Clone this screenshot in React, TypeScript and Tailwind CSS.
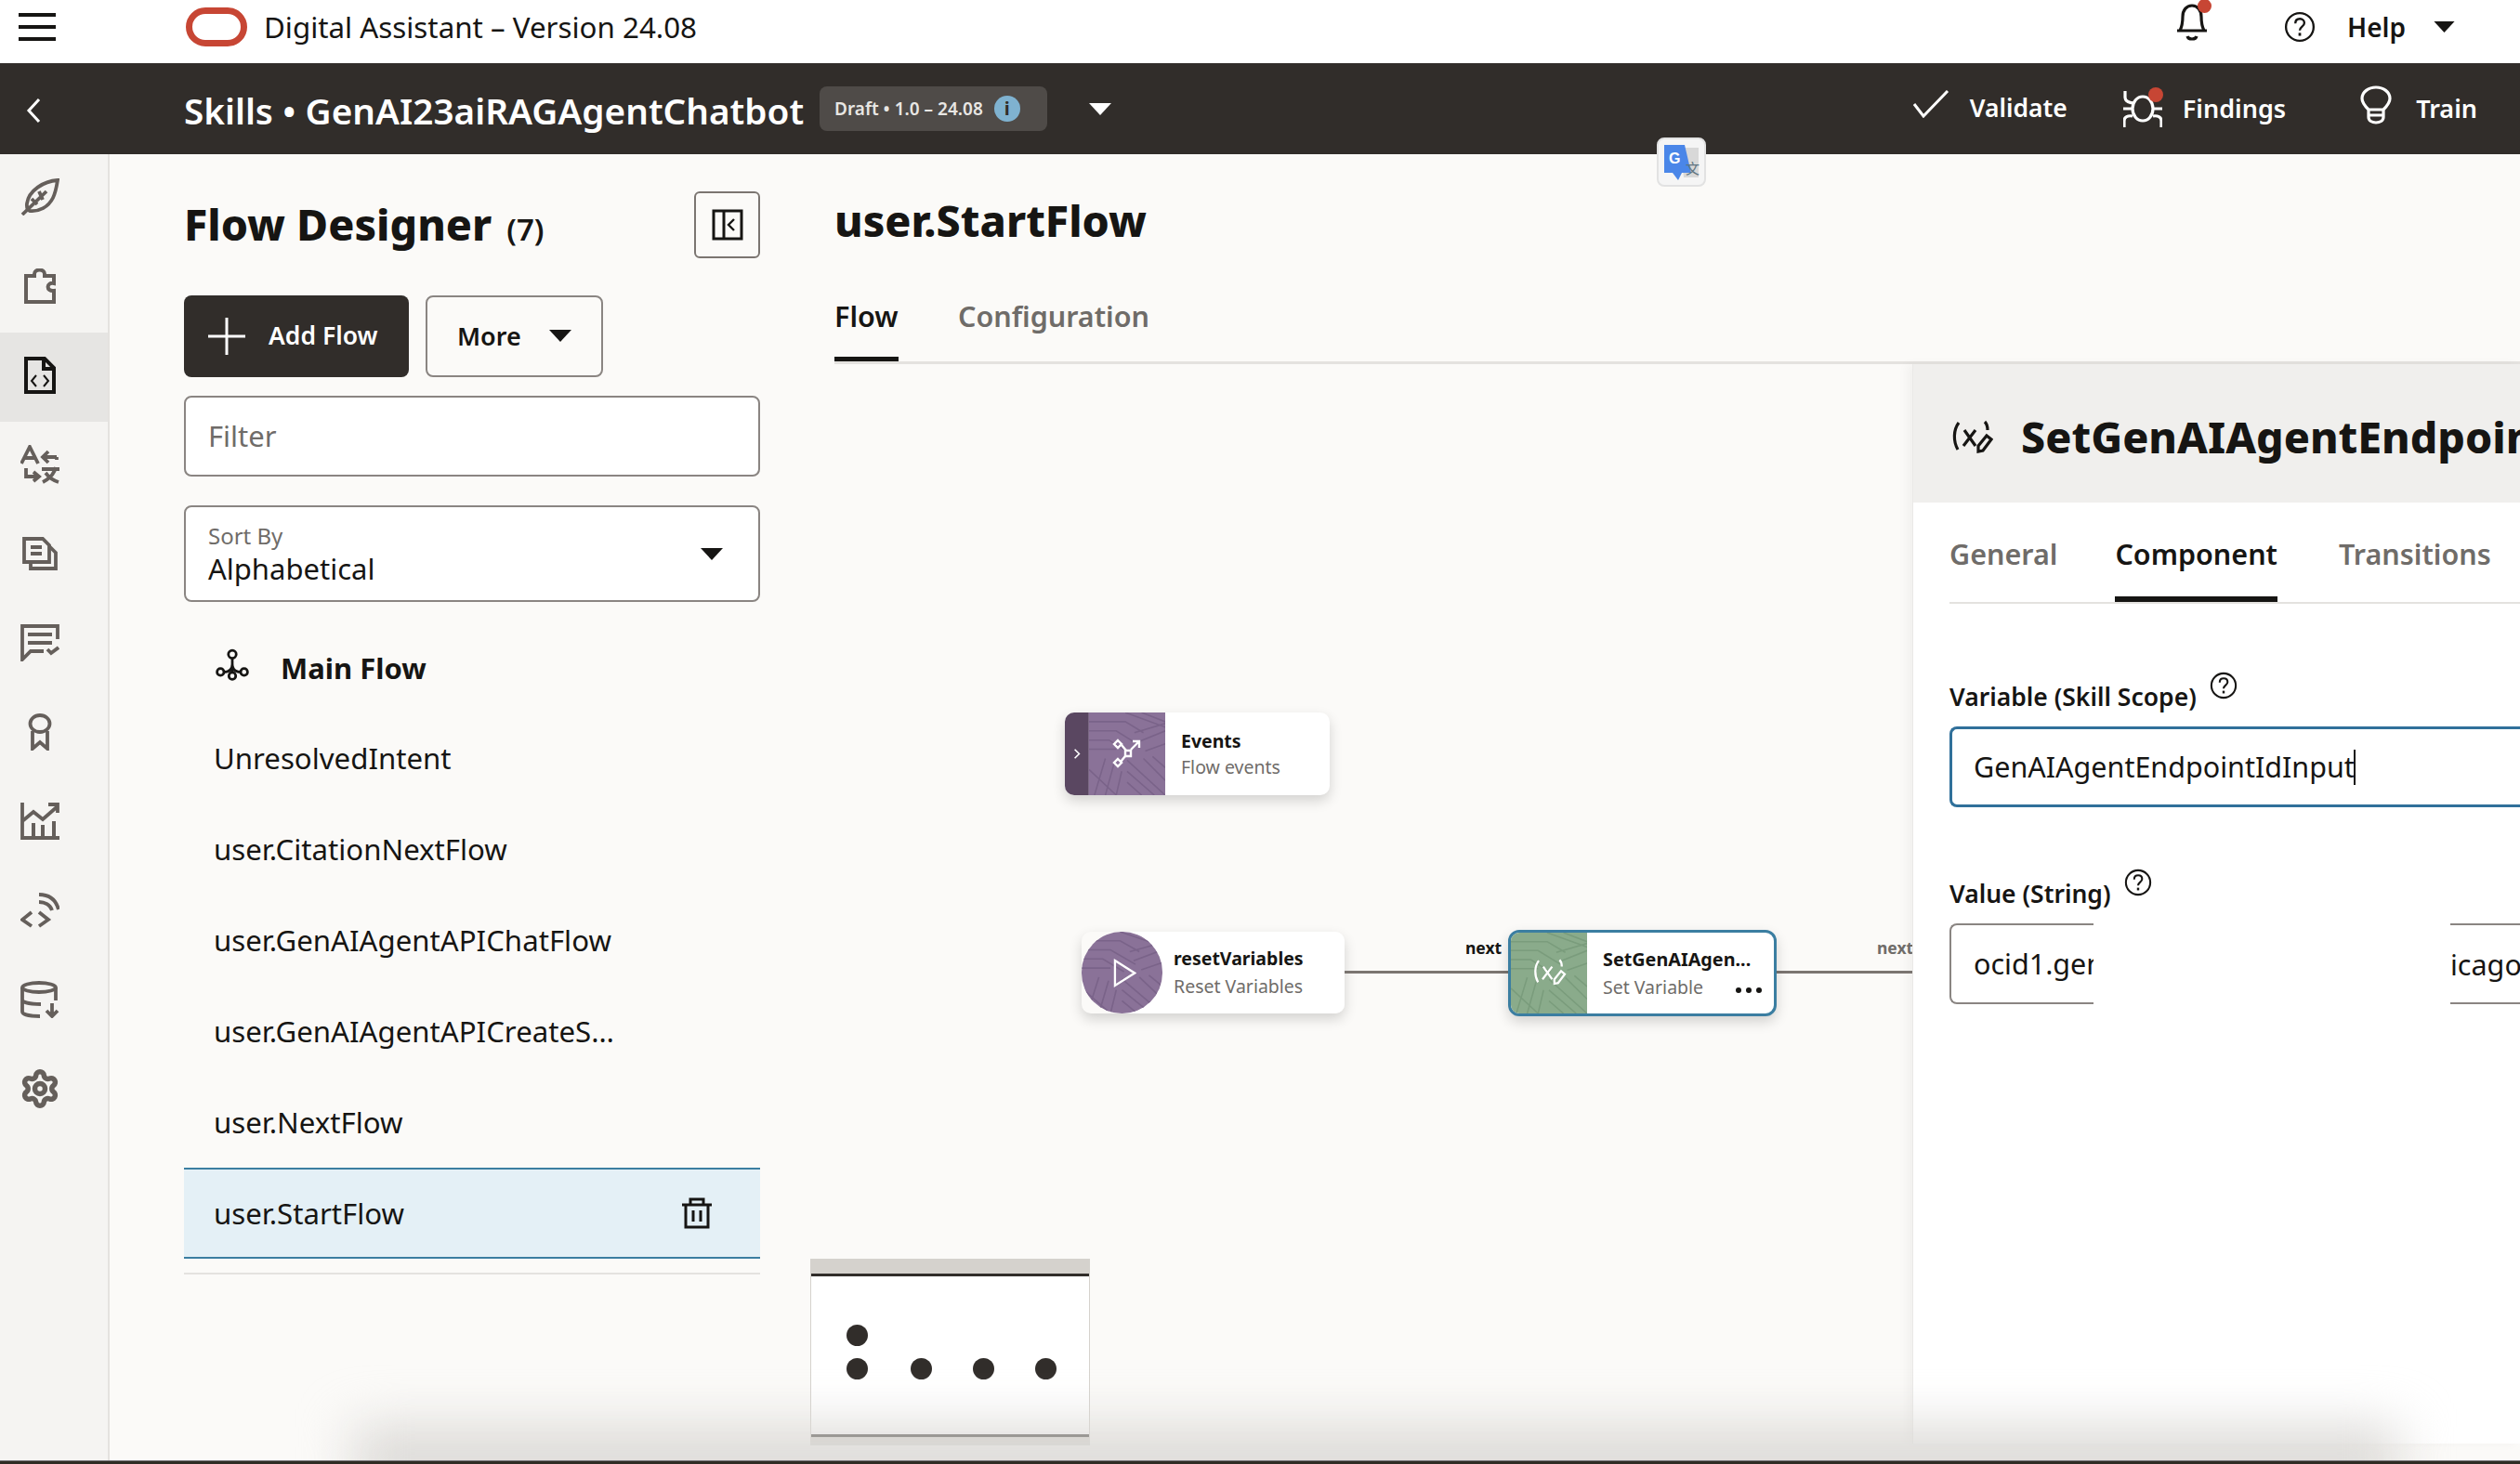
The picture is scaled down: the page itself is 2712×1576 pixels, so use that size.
import React from "react";
import { Settings } from "lucide-react";

const Tri = ({ className }: { className: string }) => (
  <svg viewBox="0 0 24 13" className={className} fill="currentColor"><path d="M0 0h24L12 13z" /></svg>
);

const Help = ({ className }: { className: string }) => (
  <svg viewBox="0 0 32 32" className={className} fill="none" stroke="currentColor" strokeWidth="2.2">
    <circle cx="16" cy="16" r="14" />
    <path d="M11.5 12.5c0-3 2-4.700 4.600-4.700s4.500 1.700 4.500 4.200c0 3.700-4.600 3.600-4.600 7.500" />
    <path d="M16 22v3" strokeWidth="2.600" />
  </svg>
);

const SetVar = ({ className, strokeW = 2.6 }: { className: string; strokeW?: number }) => (
  <svg viewBox="0 0 44 40" className={className} fill="none" stroke="currentColor" strokeWidth={strokeW}>
    <path d="M7 4C1 12 1 24 6 33" />
    <path d="M13 12l12 17M25 12L12 29" />
    <path d="M35 3c2 2 3 5 3 9" />
    <path d="M28 29l9-11 5 4-9 12-5 1z" />
  </svg>
);

const side: { active?: boolean; el: React.ReactNode }[] = [
  { el: <svg viewBox="0 0 42 40" className="w-[42px] h-[40px]" fill="none" stroke="currentColor" strokeWidth="3.800"><path d="M40 2C25 3 9 13 7 27c-.5 4 1 7 3 8 10 1 20-4 25-14 3-6 4-13 5-19z" /><path d="M2 39L28 14M12 22l6 6M20 14l4 9" /></svg> },
  { el: <svg viewBox="0 0 34 38" className="w-[34px] h-[38px]" fill="none" stroke="currentColor" strokeWidth="4"><path d="M2 8h9V6c0-6 11-6 11 0v2h10v8c-8-2-9 9 0 8v12H2z" /></svg> },
  { active: true, el: <svg viewBox="0 0 34 40" className="w-[34px] h-[40px]" fill="none" stroke="currentColor" strokeWidth="4"><path d="M2 2h20l10 10v26H2z" /><path d="M21 2v11h11" /><path d="M13 20l-5 6 5 6M21 20l5 6-5 6" strokeWidth="2" /></svg> },
  { el: <svg viewBox="0 0 42 42" className="w-[42px] h-[42px]" fill="none" stroke="currentColor" strokeWidth="3.800"><path d="M1 20L10 2l9 18M5 14h10" /><path d="M39 13H25M30 7l-6 6 6 6M39 13v3" /><path d="M6 25v9h13M14 29l6 5-6 5" /><path d="M23 26h19M38 24c-2 8-8 13-14 16M27 30c3 4 8 8 14 10" /></svg> },
  { el: <svg viewBox="0 0 38 36" className="w-[38px] h-[36px]" fill="none" stroke="currentColor" strokeWidth="3.800"><path d="M2 2h20l7 7v18H2z" /><path d="M9 11h12M9 18h12" /><path d="M29 10l7 7v17H9v-7" /></svg> },
  { el: <svg viewBox="0 0 42 40" className="w-[42px] h-[40px]" fill="none" stroke="currentColor" strokeWidth="3.800"><path d="M40 16V2H2v36l9-9h14" /><path d="M8 11h26M8 20h26" /><path d="M29 27l4 4 8-6" /></svg> },
  { el: <svg viewBox="0 0 26 40" className="w-[26px] h-[40px]" fill="none" stroke="currentColor" strokeWidth="3.800"><ellipse cx="13" cy="11" rx="10.500" ry="9" /><path d="M5 19v19l8-7 8 7V19" /></svg> },
  { el: <svg viewBox="0 0 42 40" className="w-[42px] h-[40px]" fill="none" stroke="currentColor" strokeWidth="3.800"><path d="M2 0v38h40" /><path d="M2 20l12-10 10 8L40 4M30 2h10v9" /><path d="M14 22v15M24 24v13M36 20v17" strokeWidth="4" /></svg> },
  { el: <svg viewBox="0 0 42 40" className="w-[42px] h-[40px]" fill="none" stroke="currentColor" strokeWidth="3.800"><path d="M12 22L2 30l10 7M20 22l10 8-10 7" /><path d="M20 3c10 0 18 5 21 16M20 11c6 0 12 3 14 9" /></svg> },
  { el: <svg viewBox="0 0 42 40" className="w-[42px] h-[40px]" fill="none" stroke="currentColor" strokeWidth="3.800"><ellipse cx="20" cy="7" rx="18" ry="5" /><path d="M2 7v26c0 3 8 5 19 5M38 7v14M2 20c0 3 8 5 20 5" /><path d="M34 24v13M28 32l6 6 6-6" /></svg> },
  { el: <Settings className="w-[44px] h-[44px]" strokeWidth={3} /> },
];

const Texture = ({ tone, line }: { tone: string; line: string }) => (
  <svg className="w-full h-full block" viewBox="0 0 84 90" preserveAspectRatio="none" aria-hidden="true">
    <rect width="84" height="90" fill={tone} />
    <g fill="none" stroke={line} strokeWidth="1.600">
      <path d="M0 10h40l20 12M0 20h30l26 16M0 30h22l22 14M0 40h30M40 0l44 16M58 0l26 10M50 22l34-10M54 32l30-12M62 42l22-8" />
      <path d="M6 90l12-40M18 90l10-36M30 90l6-26M0 62l30 28M42 52l42 38M42 64l30 26M42 76l16 14M60 50l24 24M70 48l14 12" />
    </g>
  </svg>
);

const Canvas = () => (
  <div className="relative flex-1 min-w-0 overflow-hidden">
    {/* Events node */}
    <div className="absolute left-[248px] top-[375px] w-[285px] h-[89px] flex rounded-[10px] bg-white shadow-[0_6px_14px_rgba(0,0,0,0.16)] overflow-hidden">
      <div className="w-[26px] bg-[#5a4761] flex items-center justify-center border-r border-[#7c6a84]">
        <svg viewBox="0 0 10 16" className="w-[8px] h-[13px]" fill="none" stroke="white" strokeWidth="2"><path d="M2 2l6 6-6 6" /></svg>
      </div>
      <div className="relative w-[82px]">
        <Texture tone="#8a7298" line="#7a6389" />
        <svg viewBox="0 0 32 32" className="absolute left-[25px] top-[28px] w-[32px] h-[32px]" fill="none" stroke="white" strokeWidth="2.400">
          <path d="M6 2l4 4-4 4-4-4zM14 13h6v6h-6zM6 22l4 4-4 4-4-4z" />
          <path d="M10 7l5 6M14 19l-5 6M20 12l9-9M22 3h7v7" />
        </svg>
      </div>
      <div className="flex flex-col justify-center pl-[17px]">
        <span className="text-[19.500px] leading-[28px] font-bold text-[#161513]">Events</span>
        <span className="text-[19.500px] leading-[28px] text-[#6f6c69]">Flow events</span>
      </div>
    </div>

    {/* resetVariables node */}
    <div className="absolute left-[266px] top-[611px] w-[283px] h-[88px] flex items-center rounded-[10px] shadow-[0_6px_14px_rgba(0,0,0,0.16)]">
      <div className="absolute left-[44px] right-0 top-0 bottom-0 bg-white rounded-r-[10px]" />
      <div className="relative w-[87px] h-[88px] rounded-full overflow-hidden shrink-0">
        <Texture tone="#8a7298" line="#7a6389" />
        <svg viewBox="0 0 26 32" className="absolute left-[34px] top-[25px] w-[25px] h-[39px]" fill="none" stroke="white" strokeWidth="2.400"><path d="M2 2l22 14L2 30z" /></svg>
      </div>
      <div className="relative flex flex-col justify-center pl-[12px]">
        <span className="text-[19.500px] leading-[30px] font-bold text-[#161513] whitespace-nowrap">resetVariables</span>
        <span className="text-[19.500px] leading-[30px] text-[#6f6c69] whitespace-nowrap">Reset Variables</span>
      </div>
    </div>

    {/* connectors */}
    <div className="absolute left-[549px] top-[653px] w-[177px] h-[3px] bg-[#7b7571]" />
    <span className="absolute left-[679px] top-[617px] text-[17.500px] leading-[22px] font-bold text-[#161513]">next</span>
    <div className="absolute left-[1014px] top-[653px] w-[146px] h-[3px] bg-[#7b7571]" />
    <span className="absolute left-[1122px] top-[617px] text-[17.500px] leading-[22px] font-bold text-[#6f6c69]">next</span>

    {/* SetGenAIAgen node */}
    <div className="absolute left-[725px] top-[609px] w-[289px] h-[93px] flex rounded-[12px] bg-white border-[3px] border-[#3b7ea1] shadow-[0_6px_14px_rgba(0,0,0,0.16)] overflow-hidden">
      <div className="relative w-[82px] shrink-0">
        <Texture tone="#8aab8b" line="#7a9c7c" />
        <SetVar className="absolute left-[24px] top-[27px] w-[36px] h-[32px] text-white" strokeW={2.8} />
      </div>
      <div className="relative flex-1 flex flex-col justify-center pl-[17px]">
        <span className="text-[19.800px] leading-[30px] font-bold text-[#161513] whitespace-nowrap">SetGenAIAgen...</span>
        <span className="text-[19.500px] leading-[30px] text-[#6f6c69] whitespace-nowrap">Set Variable</span>
        <div className="absolute right-[13px] bottom-[22px] flex gap-[5px]">
          <i className="block w-[6px] h-[6px] rounded-full bg-[#161513]" />
          <i className="block w-[6px] h-[6px] rounded-full bg-[#161513]" />
          <i className="block w-[6px] h-[6px] rounded-full bg-[#161513]" />
        </div>
      </div>
    </div>
  </div>
);

const flows = ["UnresolvedIntent", "user.CitationNextFlow", "user.GenAIAgentAPIChatFlow", "user.GenAIAgentAPICreateS…", "user.NextFlow"];

export default function App() {
  return (
    <div className="relative w-[2712px] h-[1576px] overflow-hidden flex flex-col bg-[#fbfaf8] text-[#161513] font-['Noto_Sans',sans-serif]">
      {/* Top white bar */}
      <header className="h-[68px] shrink-0 bg-white flex items-center relative pb-[10px]">
        <div className="ml-[20px] w-[40px] flex flex-col gap-[9px]">
          <i className="block h-[4px] bg-[#161513]" />
          <i className="block h-[4px] bg-[#161513]" />
          <i className="block h-[4px] bg-[#161513]" />
        </div>
        <svg viewBox="0 0 66 42" className="ml-[140px] w-[66px] h-[42px]" fill="none" stroke="#c74634" strokeWidth="7"><rect x="3.500" y="3.500" width="59" height="35" rx="17.500" /></svg>
        <span className="ml-[18px] text-[31.300px] leading-[40px] whitespace-nowrap">Digital Assistant – Version 24.08</span>
        <div className="ml-auto flex items-center">
          <div className="relative w-[38px] h-[42px] -mt-[12px]">
            <svg viewBox="0 0 36 42" className="w-[36px] h-[42px]" fill="none" stroke="#161513" strokeWidth="3.200"><path d="M5 31c2-4 3-7 3-15 0-7 4-12 10-12s10 5 10 12c0 8 1 11 3 15zM2 31h32" /><path d="M13 37c1 4 9 4 10 0" /></svg>
            <i className="absolute left-[24px] -top-[3px] w-[15px] h-[15px] rounded-full bg-[#c74634]" />
          </div>
          <Help className="ml-[79px] w-[34px] h-[34px] text-[#161513]" />
          <span className="ml-[34px] text-[28px] font-semibold leading-[40px]">Help</span>
          <Tri className="ml-[29px] mr-[69px] w-[25px] h-[12px] text-[#161513]" />
        </div>
      </header>

      {/* Dark bar */}
      <div className="h-[98px] shrink-0 bg-[#312d2a] text-white flex items-center">
        <svg viewBox="0 0 16 28" className="ml-[28px] mt-[4px] w-[16px] h-[28px]" fill="none" stroke="white" strokeWidth="3"><path d="M14 2L3 14l11 12" /></svg>
        <span className="ml-[154px] mt-[4px] w-[668px] shrink-0 text-[38.700px] leading-[50px] font-semibold whitespace-nowrap">Skills • GenAI23aiRAGAgentChatbot</span>
        <div className="ml-[16px] w-[245px] h-[48px] rounded-[8px] bg-[#4f4b48] flex items-center pl-[16px]">
          <span className="text-[19px] font-semibold text-[#e8e6e3] whitespace-nowrap">Draft • 1.0 – 24.08</span>
          <span className="ml-[12px] w-[28px] h-[28px] rounded-full bg-[#7fb2d0] text-[#312d2a] text-[20px] font-bold flex items-center justify-center">i</span>
        </div>
        <Tri className="ml-[45px] w-[24px] h-[13px] text-white" />
        <div className="ml-auto flex items-center">
          <svg viewBox="0 0 40 30" className="w-[40px] h-[30px] -mt-[10px]" fill="none" stroke="white" strokeWidth="3"><path d="M2 15l10 13L38 1" /></svg>
          <span className="ml-[22px] text-[26.500px] font-semibold">Validate</span>
          <div className="relative ml-[60px] w-[42px] h-[42px]">
            <svg viewBox="0 0 42 42" className="w-[42px] h-[42px]" fill="none" stroke="white" strokeWidth="3.200"><ellipse cx="21" cy="21" rx="11" ry="13" /><path d="M2 2v7c0 4 5 6 10 6M0 21h10M32 21h10M1 41v-7c0-4 4-6 9-5M41 41v-7c0-4-4-6-9-5" /></svg>
            <i className="absolute left-[27px] -top-[2px] w-[16px] h-[16px] rounded-full bg-[#c74634]" />
          </div>
          <span className="ml-[22px] text-[27px] font-semibold">Findings</span>
          <svg viewBox="0 0 34 42" className="ml-[80px] w-[34px] h-[42px] -mt-[8px]" fill="none" stroke="white" strokeWidth="3.200"><path d="M9 26C3 20 2 16 2 14 2 7 9 2 17 2s15 5 15 12c0 2-1 6-7 12zM9 26h16v8c0 8-16 8-16 0zM9 32h16" /></svg>
          <span className="ml-[26px] mr-[46px] text-[27px] font-semibold">Train</span>
        </div>
      </div>

      <div className="flex-1 min-h-0 flex">
        {/* Icon rail */}
        <nav className="w-[118px] shrink-0 bg-[#f5f4f2] border-r-[2px] border-[#e4e2df] flex flex-col">
          {side.map((s, i) => (
            <div key={i} className={`h-[96px] pr-[30px] pb-[4px] flex items-center justify-center ${s.active ? "bg-[#e6e5e3] text-[#161513]" : "text-[#655f5b]"}`}>
              {s.el}
            </div>
          ))}
        </nav>

        {/* Flow list panel */}
        <aside className="w-[620px] ml-[80px] shrink-0 flex flex-col">
          <div className="h-[152px] pt-[40px] flex items-start justify-between">
            <div className="flex items-baseline h-[72px] pt-[7px]">
              <h1 className="text-[46.500px] leading-[56px] font-extrabold">Flow Designer</h1>
              <span className="ml-[16px] text-[33px] font-semibold">(7)</span>
            </div>
            <button className="w-[71px] h-[72px] border-2 border-[#7b7571] rounded-[6px] flex items-center justify-center">
              <svg viewBox="0 0 34 34" className="w-[34px] h-[34px]" fill="none" stroke="#161513" strokeWidth="3"><rect x="2" y="2" width="30" height="30" /><path d="M13 2v30" /><path d="M24 11l-6 6 6 6" strokeWidth="2.400" /></svg>
            </button>
          </div>
          <div className="flex gap-[18px] h-[88px]">
            <button className="w-[242px] bg-[#312d2a] text-white rounded-[8px] flex items-center">
              <svg viewBox="0 0 40 40" className="ml-[25px] w-[42px] h-[40px]" fill="none" stroke="white" strokeWidth="3"><path d="M20 0v40M0 20h40" /></svg>
              <span className="ml-[24px] text-[26.500px] font-semibold">Add Flow</span>
            </button>
            <button className="w-[191px] border-2 border-[#8a8582] rounded-[8px] flex items-center">
              <span className="ml-[32px] text-[27px] font-semibold">More</span>
              <Tri className="ml-[30px] w-[24px] h-[13px] text-[#161513] -mt-[2px]" />
            </button>
          </div>
          <div className="mt-[20px] h-[87px] border-2 border-[#8a8582] rounded-[8px] bg-white flex items-center pl-[24px]">
            <span className="text-[31px] text-[#6f6c69]">Filter</span>
          </div>
          <div className="mt-[31px] h-[104px] border-2 border-[#8a8582] rounded-[8px] bg-white flex items-center justify-between pl-[24px] pr-[38px]">
            <div className="flex flex-col relative top-[2px]">
              <span className="text-[24px] leading-[28px] text-[#6f6c69]">Sort By</span>
              <span className="text-[31px] leading-[42px]">Alphabetical</span>
            </div>
            <Tri className="w-[24px] h-[13px] text-[#161513]" />
          </div>
          <ul className="mt-[21px] text-[31.200px]">
            <li className="h-[98px] flex items-center pl-[34px]">
              <svg viewBox="0 0 34 34" className="w-[36px] h-[36px] -mt-[4px]" fill="none" stroke="#161513" strokeWidth="2.600"><circle cx="17" cy="6" r="4" /><circle cx="5" cy="24" r="3.500" /><circle cx="17" cy="28" r="3.500" /><circle cx="29" cy="24" r="3.500" /><path d="M17 10v14M8 24c5 0 9-2 9-8 0 6 4 8 9 8" /></svg>
              <span className="ml-[34px] text-[31px] font-bold relative top-[1px]">Main Flow</span>
            </li>
            {flows.map((f) => (
              <li key={f} className="h-[98px] flex items-center pl-[32px] whitespace-nowrap">{f}</li>
            ))}
            <li className="h-[98px] flex items-center justify-between pl-[32px] pr-[52px] bg-[#e4f0f6] border-y-[2px] border-[#3b7ea1]">
              <span>user.StartFlow</span>
              <svg viewBox="0 0 32 34" className="w-[32px] h-[34px]" fill="none" stroke="#161513" strokeWidth="3"><path d="M0 8h32M9 8V2h14v6M4 8v24h24V8M12 14v12M20 14v12" /></svg>
            </li>
          </ul>
          <div className="mt-[15px] h-[2px] bg-[#e4e2df]" />
        </aside>

        {/* Editor */}
        <main className="flex-1 min-w-0 ml-[80px] flex flex-col">
          <div className="h-[226px] shrink-0 border-b-[3px] border-[#e4e2df] flex flex-col">
            <h2 className="mt-[41px] text-[46.500px] leading-[60px] font-extrabold">user.StartFlow</h2>
            <div className="mt-[50px] flex gap-[64px]">
              <span className="w-[69px] text-[30.500px] font-semibold leading-[46px] whitespace-nowrap h-[72px] border-b-[5px] border-[#161513]">Flow</span>
              <span className="text-[30.500px] font-semibold leading-[46px] text-[#6f6c69]">Configuration</span>
            </div>
          </div>
          <div className="flex-1 min-h-0 flex">
            <Canvas />
            {/* Property panel */}
            <section className="w-[654px] shrink-0 bg-white border-l border-[#eae9e7] shadow-[-6px_0_10px_rgba(0,0,0,0.04)] overflow-hidden mb-[22px]">
              <div className="h-[149px] bg-[#f0efed] flex items-center pl-[42px] pt-[8px] whitespace-nowrap">
                <SetVar className="w-[44px] h-[40px] shrink-0 text-[#161513]" strokeW={3.2} />
                <span className="ml-[30px] text-[46.500px] font-extrabold">SetGenAIAgentEndpointIdInput</span>
              </div>
              <div className="ml-[39px] h-[109px] border-b-[2px] border-[#e4e2df] flex whitespace-nowrap">
                <span className="mt-[32px] text-[30.500px] leading-[46px] font-semibold text-[#6f6c69]">General</span>
                <span className="ml-[62px] mt-[32px] text-[30.500px] leading-[46px] font-semibold h-[75px] border-b-[6px] border-[#161513]">Component</span>
                <span className="ml-[66px] mt-[32px] text-[30.500px] leading-[46px] font-semibold text-[#6f6c69]">Transitions</span>
              </div>
              <div className="ml-[39px]">
                <div className="mt-[81px] flex items-start">
                  <span className="text-[26.500px] leading-[38px] font-semibold">Variable (Skill Scope)</span>
                  <Help className="ml-[14px] -mt-[8px] w-[30px] h-[30px]" />
                </div>
                <div className="mt-[13px] h-[87px] -mr-[4px] border-[3px] border-r-0 border-[#30709a] rounded-l-[8px] flex items-center pl-[23px] text-[30.500px] whitespace-nowrap">
                  <span>GenAIAgentEndpointIdInput</span>
                  <i className="block w-[2px] h-[38px] bg-[#161513] -ml-[1px]" />
                </div>
                <div className="mt-[74px] flex items-start">
                  <span className="text-[26.500px] leading-[38px] font-semibold">Value (String)</span>
                  <Help className="ml-[14px] -mt-[8px] w-[30px] h-[30px]" />
                </div>
                <div className="relative mt-[13px] h-[87px] border-2 border-r-0 border-[#8a8582] rounded-l-[8px] flex items-center pl-[24px] text-[30.500px] whitespace-nowrap">
                  <span className="block w-[130px] overflow-hidden">ocid1.genaiagentendpoint</span>
                  <div className="absolute left-[153px] w-[384px] -top-[2px] -bottom-[2px] bg-white" />
                  <span className="absolute left-[537px] top-[20px] leading-[44px]">icago-1</span>
                </div>
              </div>
            </section>
          </div>
        </main>
      </div>

      {/* Minimap */}
      <div className="absolute left-[872px] top-[1355px] w-[301px] h-[201px] bg-[#d5d2cd] flex flex-col px-[1px] pt-[16px] pb-[9px] z-20">
        <div className="flex-1 bg-white border-y-[3px] border-[#312d2a] relative">
          <i className="absolute left-[38px] top-[52px] w-[23px] h-[23px] rounded-full bg-[#312d2a]" />
          <i className="absolute left-[38px] top-[88px] w-[23px] h-[23px] rounded-full bg-[#312d2a]" />
          <i className="absolute left-[107px] top-[88px] w-[23px] h-[23px] rounded-full bg-[#312d2a]" />
          <i className="absolute left-[174px] top-[88px] w-[23px] h-[23px] rounded-full bg-[#312d2a]" />
          <i className="absolute left-[241px] top-[88px] w-[23px] h-[23px] rounded-full bg-[#312d2a]" />
        </div>
      </div>

      {/* Translate extension badge */}
      <div className="absolute left-[1783px] top-[148px] w-[53px] h-[53px] rounded-[8px] bg-[#f5f5f5] border-2 border-[#e2e2e2] flex items-center justify-center z-20">
        <svg viewBox="0 0 40 40" className="w-[40px] h-[40px]">
          <path d="M18 4h20v32H22z" fill="#d8d8d8" />
          <path d="M1 1h22l7 30H12l8 0-4 8-6-8H1z" fill="#4a86e8" />
          <text x="6" y="21" fontSize="16" fontWeight="700" fill="white" fontFamily="Liberation Sans, sans-serif">G</text>
          <text x="24" y="32" fontSize="15" fill="#5f7480" fontFamily="Noto Sans CJK SC, sans-serif">文</text>
        </svg>
      </div>

      {/* Bottom desktop shadow */}
      <div className="absolute left-[380px] right-[130px] -bottom-[30px] h-[70px] bg-[#dbd9d6] blur-[28px] pointer-events-none z-30" />
      <div className="absolute left-0 right-0 bottom-0 h-[4px] bg-[#2f2c24] border-t border-[#77757a] z-40" />
    </div>
  );
}
